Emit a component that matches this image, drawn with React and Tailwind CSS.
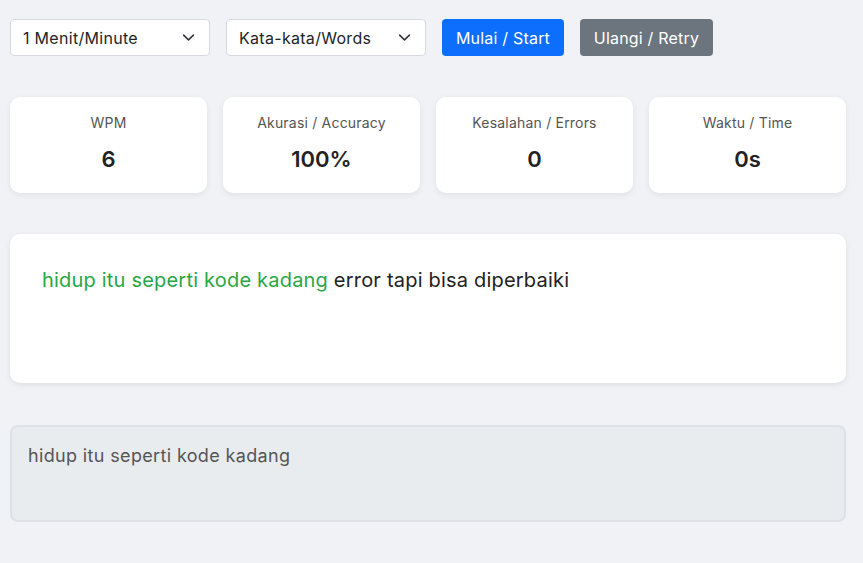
import React from "react";

function Chevron() {
  return (
    <svg width="13" height="13" viewBox="0 0 16 16" fill="none" stroke="#343a40" strokeWidth="2" strokeLinecap="round" strokeLinejoin="round">
      <path d="M2 5l6 6 6-6" />
    </svg>
  );
}

function Select({ label }) {
  return (
    <div className="w-[200px] h-[37px] bg-white border border-[#d6dae0] rounded-[4px] flex items-center justify-between pl-[12px] pr-[14px] text-[16px] tracking-[0.3px] text-[#212529]">
      <span>{label}</span>
      <Chevron />
    </div>
  );
}

function Stat({ label, value }) {
  return (
    <div className="bg-white rounded-[10px] shadow-[0_2px_6px_rgba(0,0,0,0.07)] h-[96px] flex flex-col items-center pt-[16px]">
      <div className="text-[14px] text-[#555] leading-[20px] tracking-[0.2px]">{label}</div>
      <div className="text-[22px] font-semibold text-[#222] leading-[30px] mt-[11px]">{value}</div>
    </div>
  );
}

export default function App() {
  return (
    <div className="min-h-[563px] bg-[#f0f2f5] pt-[19px] pl-[10px]" style={{ fontFamily: "Inter, 'Noto Sans', sans-serif" }}>
      <div className="w-[836px]">
        <div className="flex gap-[16px]">
          <Select label="1 Menit/Minute" />
          <Select label="Kata-kata/Words" />
          <button className="w-[122px] h-[37px] bg-[#0d6efd] text-white rounded-[4px] text-[16px] tracking-[0.2px]">Mulai / Start</button>
          <button className="w-[133px] h-[37px] bg-[#6c757d] text-white rounded-[4px] text-[16px] tracking-[0.2px]">Ulangi / Retry</button>
        </div>
        <div className="grid grid-cols-4 gap-[16px] mt-[41px]">
          <Stat label="WPM" value="6" />
          <Stat label="Akurasi / Accuracy" value="100%" />
          <Stat label="Kesalahan / Errors" value="0" />
          <Stat label="Waktu / Time" value="0s" />
        </div>
        <div className="mt-[41px] bg-white rounded-[10px] shadow-[0_2px_6px_rgba(0,0,0,0.08)] h-[149px] px-[32px] pt-[31px] text-[20px] leading-[30px] tracking-[0.2px]">
          <span className="text-[#28a745]">hidup itu seperti kode kadang</span>
          <span className="text-[#222]"> error tapi bisa diperbaiki</span>
        </div>
        <div className="mt-[42px] h-[97px] bg-[#e9ecef] border-2 border-[#dee2e6] rounded-[8px] px-[16px] pt-[17px] text-[18px] leading-[24px] tracking-[0.35px] text-[#555]">
          hidup itu seperti kode kadang
        </div>
      </div>
    </div>
  );
}
